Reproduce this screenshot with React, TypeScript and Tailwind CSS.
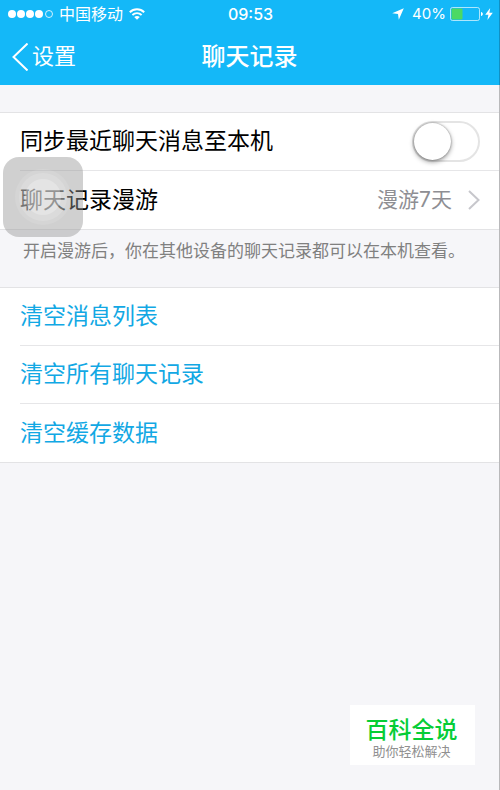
import { useState } from "react";
import type { ReactNode } from "react";

const clearItems = ["清空消息列表", "清空所有聊天记录", "清空缓存数据"];

function SignalDots() {
  return (
    <div className="flex gap-px">
      {[0, 1, 2, 3].map((i) => (
        <span key={i} className="size-2 rounded-full bg-white" />
      ))}
      <span className="ml-px size-2 rounded-full border border-white/80" />
    </div>
  );
}

function WifiIcon() {
  return (
    <svg className="h-3 w-4" viewBox="0 0 16 12" fill="none" aria-hidden="true">
      <path d="M0.8 4.2C4.8 0.3 11.2 0.3 15.2 4.2" stroke="white" strokeWidth="2" />
      <path d="M3.4 7C6 4.4 10 4.4 12.6 7" stroke="white" strokeWidth="1.8" />
      <path d="M8 11.8L5.2 9C6.9 7.6 9.1 7.6 10.8 9Z" fill="white" />
    </svg>
  );
}

function StatusBar() {
  return (
    <div className="grid h-7 grid-cols-[1fr_auto_1fr] items-center pr-1.5 pl-2 text-base leading-5">
      <div className="flex items-center">
        <SignalDots />
        <span className="ml-1.5">中国移动</span>
        <span className="ml-1.5">
          <WifiIcon />
        </span>
      </div>
      <time className="font-medium">09:53</time>
      <div className="flex items-center justify-end">
        <svg className="h-3 w-3" viewBox="0 0 12 12" aria-hidden="true">
          <path d="M11.8 0.2L6.8 11.8L6 6L0.2 5.2Z" fill="white" />
        </svg>
        <span className="ml-2 text-[15px]">40%</span>
        <svg className="ml-1 h-3.5 w-[33px]" viewBox="0 0 33 14" aria-hidden="true">
          <rect x="0.5" y="0.5" width="29" height="13" rx="2" fill="none" stroke="white" strokeOpacity="0.65" />
          <rect x="1.5" y="1.5" width="11" height="11" rx="1" fill="#4cd964" />
          <path d="M31 5C33.4 5.4 33.4 8.6 31 9Z" fill="white" />
        </svg>
        <svg className="ml-0.5 h-3 w-2" viewBox="0 0 8 12" aria-hidden="true">
          <path d="M5.2 0L0.2 6.8H3.4L2.4 12L7.8 4.8H4.4Z" fill="white" />
        </svg>
      </div>
    </div>
  );
}

function NavBar() {
  return (
    <div className="grid h-[57px] grid-cols-[1fr_auto_1fr] items-center px-3">
      <button type="button" className="flex items-center gap-1 text-[22px]">
        <svg className="h-7 w-4" viewBox="0 0 16 28" fill="none" aria-hidden="true">
          <path d="M15.5 0.5L1.5 14L15.5 27.5" stroke="white" strokeWidth="2" />
        </svg>
        设置
      </button>
      <h1 className="text-2xl font-medium">聊天记录</h1>
    </div>
  );
}

function Group({ children }: { children: ReactNode }) {
  return (
    <div className="divide-y divide-[#e6e6e8] border-y border-[#e3e3e5] bg-white pl-5 text-[23px]">
      {children}
    </div>
  );
}

export default function App() {
  const [synced, setSynced] = useState(false);

  return (
    <div className="relative min-h-screen border-r border-[#b9b9bb] bg-[#f6f6f9] font-['Inter','Noto_Sans_CJK_SC',sans-serif] text-black">
      <header className="-mr-px border-r border-[#1090c4] bg-[#14b8f8] text-white">
        <StatusBar />
        <NavBar />
      </header>

      <main className="pt-[27px]">
        <Group>
          <label className="flex h-[58px] items-center justify-between pr-[19px]">
            同步最近聊天消息至本机
            <input
              type="checkbox"
              role="switch"
              checked={synced}
              onChange={(e) => setSynced(e.target.checked)}
              className="h-[41px] w-[68px] appearance-none rounded-full border-2 border-[#e4e4e4] bg-white before:block before:size-[37px] before:rounded-full before:bg-white before:shadow-[0_2px_5px_rgba(0,0,0,0.4),0_0_2px_rgba(0,0,0,0.4)] checked:bg-[#4cd964] checked:before:ml-auto"
            />
          </label>
          <button type="button" className="flex h-[58px] w-full items-center pr-[19px]">
            <span>聊天记录漫游</span>
            <span className="ml-auto text-[21px] text-[#8e8e93]">漫游7天</span>
            <svg className="ml-4 h-5 w-3" viewBox="0 0 12 20" fill="none" aria-hidden="true">
              <path d="M1 1L10.5 10L1 19" stroke="#c7c7cc" strokeWidth="2" />
            </svg>
          </button>
        </Group>

        <p className="px-[23px] pt-2 pb-[23px] text-[17px] leading-[26px] whitespace-nowrap text-[#808080]">
          开启漫游后，你在其他设备的聊天记录都可以在本机查看。
        </p>

        <Group>
          {clearItems.map((item) => (
            <button
              key={item}
              type="button"
              className="flex h-[58px] w-full items-center text-[#12a8e4]"
            >
              {item}
            </button>
          ))}
        </Group>
      </main>

      {/* Floating touch button */}
      <button
        type="button"
        aria-label="AssistiveTouch"
        className="absolute top-[157px] left-[3px] flex size-20 items-center justify-center rounded-2xl bg-[#979797]/45"
      >
        <span className="flex size-14 items-center justify-center rounded-full bg-white/10">
          <span className="flex size-12 items-center justify-center rounded-full bg-white/15">
            <span className="size-9 rounded-full bg-white/25" />
          </span>
        </span>
      </button>

      <aside className="absolute right-6 bottom-[25px] flex h-15 w-[125px] flex-col items-center justify-center bg-white pt-1.5 pr-0.5">
        <strong className="text-[23px] leading-[26px] font-medium text-[#06cd36]">百科全说</strong>
        <span className="text-[13px] leading-4 text-[#909090]">助你轻松解决</span>
      </aside>
    </div>
  );
}
